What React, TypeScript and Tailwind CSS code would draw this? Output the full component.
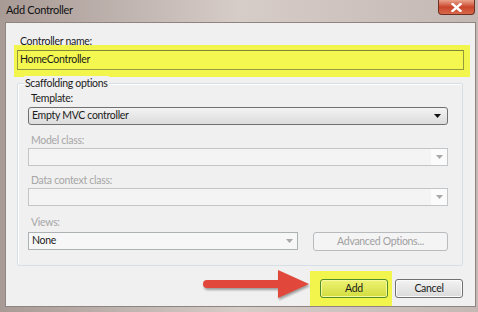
const FONT = "font-['Lato','Open_Sans',sans-serif] tracking-[-0.3px]";

function ComboArrow({ disabled }: { disabled?: boolean }) {
  return (
    <svg width="7" height="4" viewBox="0 0 7 4">
      <path d="M0 0h7L3.5 4z" fill={disabled ? "#a8a8a8" : "#111"} />
    </svg>
  );
}

function Label({ children, disabled }: { children: string; disabled?: boolean }) {
  return (
    <div
      className={`ml-[3px] h-[14px] leading-[14px] text-[10.5px] ${
        disabled ? "text-[#a6a6a6]" : "text-[#1b1b1b]"
      }`}
    >
      {children}
    </div>
  );
}

function DisabledCombo() {
  return (
    <div className="flex h-[18px] w-[420px] border border-[#c3c6c9] bg-[#f4f4f4]">
      <div className="flex-1" />
      <div className="flex w-[16px] items-center justify-center bg-[#fbfbfb]">
        <ComboArrow disabled />
      </div>
    </div>
  );
}

export default function App() {
  return (
    <div
      className={`relative flex h-[312px] w-[478px] flex-col bg-gradient-to-r from-[#a89a95] via-[#d6ccc8] to-[#c4b8b4] pb-[5px] pl-[5px] pr-[2px] ${FONT}`}
    >
      {/* Title bar */}
      <div className="flex h-[22px] items-start">
        <div className="pl-[1px] pt-[3px] text-[11px] leading-[14px] text-[#111]">
          Add Controller
        </div>
        <div className="ml-auto mr-[1px] flex h-[15px] w-[37px] items-center justify-center rounded-b-[4px] border border-t-0 border-[#6d3024] bg-gradient-to-b from-[#e8a38d] via-[#c9442a] to-[#d8694a]">
          <svg width="11" height="9" viewBox="0 0 11 9">
            <path
              d="M1.5 1l8 7M9.5 1l-8 7"
              stroke="#fff"
              strokeWidth="2.4"
              strokeLinecap="square"
            />
          </svg>
        </div>
      </div>

      {/* Client area */}
      <div className="flex flex-1 flex-col border border-[#8f8480] bg-[#f0f0f0] text-[#1b1b1b]">
        <div className="ml-[14px] mt-[11px] h-[14px] text-[10.5px] leading-[14px]">
          Controller name:
        </div>
        <div className="ml-[8px] mt-[-3px] h-[32px] w-[456px] bg-[#f2f54c] pl-[3px] pt-[5px]">
          <div className="flex h-[20px] w-[447px] items-center border border-[#959a3e] border-t-[#7f8436] bg-[#f4f74f] pl-[2px] text-[10.5px]">
            HomeController
          </div>
        </div>

        {/* Scaffolding options group */}
        <div className="relative ml-[11px] mt-[6px] w-[446px] rounded-[2px] border border-[#d5dfe5] pb-[14px] pl-[10px] pt-[7px] shadow-[inset_1px_1px_0_#fff]">
          <div className="absolute left-[6px] top-[-8px] bg-[#f0f0f0] px-[1px] text-[10.5px] leading-[14px]">
            Scaffolding options
          </div>

          <Label>Template:</Label>
          <div className="mt-[2px] flex h-[18px] w-[420px] items-center rounded-[3px] border border-[#707070] bg-gradient-to-b from-[#f3f3f3] to-[#dcdcdc] pl-[3px] pr-[6px] text-[10.5px]">
            <span className="flex-1">Empty MVC controller</span>
            <ComboArrow />
          </div>

          <div className="mt-[8px]">
            <Label disabled>Model class:</Label>
          </div>
          <div className="mt-[1px]">
            <DisabledCombo />
          </div>

          <div className="mt-[7px]">
            <Label disabled>Data context class:</Label>
          </div>
          <div className="mt-[1px]">
            <DisabledCombo />
          </div>

          <div className="mt-[9px]">
            <Label disabled>Views:</Label>
          </div>
          <div className="mt-[3px] flex items-start gap-[15px]">
            <div className="flex h-[18px] w-[270px] items-center border border-[#adb2b5] bg-[#f7f7f7] pl-[3px] pr-[4px] text-[10.5px]">
              <span className="flex-1">None</span>
              <ComboArrow disabled />
            </div>
            <div className="flex h-[19px] w-[135px] items-center justify-center rounded-[3px] border border-[#b8bcbf] bg-[#f4f4f4] text-[10.5px] text-[#a0a0a0]">
              Advanced Options...
            </div>
          </div>
        </div>

        {/* Buttons */}
        <div className="mt-[5px] flex items-start justify-end pr-[12px]">
          <div className="h-[35px] w-[82px] bg-[#f2f54c] pl-[10px] pr-[4px] pt-[8px]">
            <div className="flex h-[19px] w-[68px] items-center justify-center rounded-[3px] border border-[#4f8c2a] bg-gradient-to-b from-[#eef372] to-[#d3dc3c] text-[10.5px] shadow-[inset_0_0_0_1px_#f7fa9a]">
              Add
            </div>
          </div>
          <div className="ml-[3px] mt-[8px] flex h-[19px] w-[68px] items-center justify-center rounded-[3px] border border-[#707070] bg-gradient-to-b from-[#f3f3f3] to-[#dadada] text-[10.5px] shadow-[inset_0_0_0_1px_#fbfbfb]">
            Cancel
          </div>
        </div>
      </div>

      {/* Annotation arrow */}
      <svg
        className="absolute left-[200px] top-[264px] drop-shadow-[1px_2px_1px_rgba(0,0,0,0.35)]"
        width="112"
        height="40"
        viewBox="0 0 112 40"
      >
        <rect x="3" y="16" width="80" height="8" rx="4" fill="#e1473a" />
        <path d="M78 6L109 20L78 34z" fill="#e1473a" />
      </svg>
    </div>
  );
}
